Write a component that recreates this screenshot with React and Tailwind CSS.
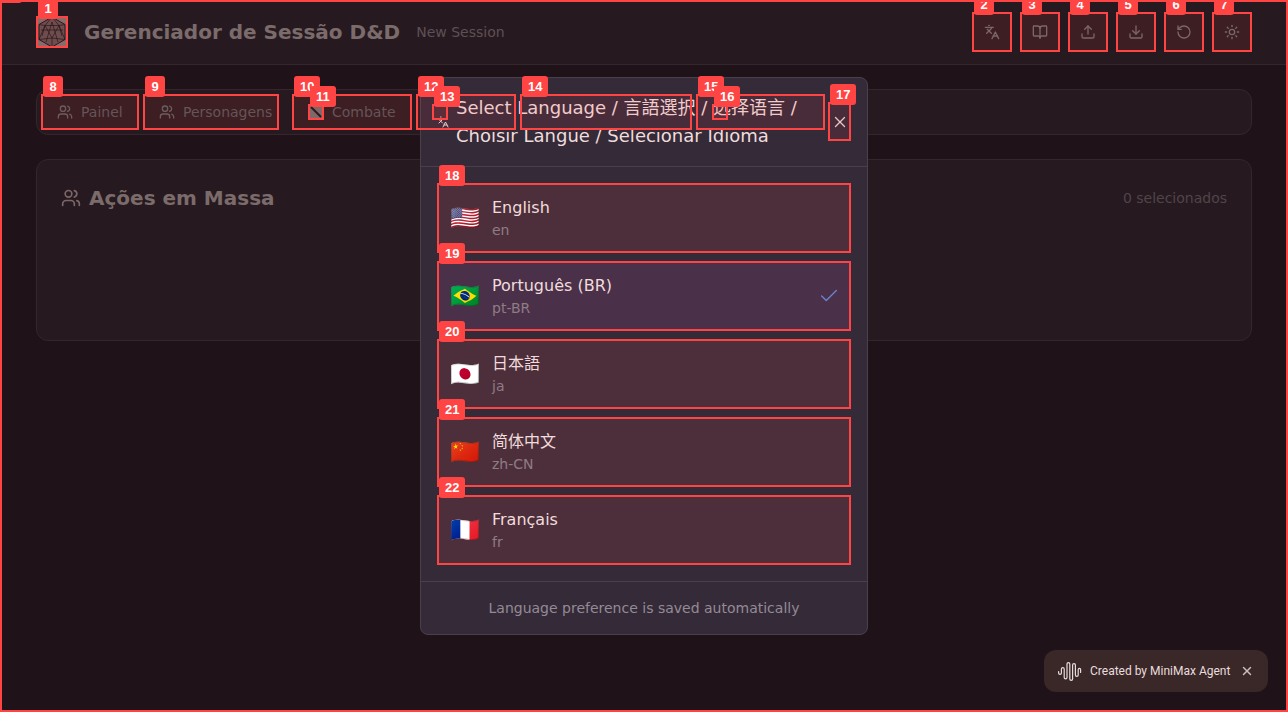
import { Languages, BookOpen, Upload, Download, RotateCcw, Sun, Users, X, Check } from "lucide-react";
import clsx from "clsx";

const Badge = ({ n }) => (
  <span className="absolute left-[2px] top-[-18px] z-30 flex h-[21px] min-w-[20px] items-center justify-center rounded-[3px] bg-[#ff4444] px-[6px] font-['Liberation_Sans',sans-serif] text-[13px] font-bold text-white">
    {n}
  </span>
);

// annotated box: red frame plus number tag
const Mark = ({ n, className, children }) => (
  <div className={clsx("relative bg-[#ff4444]/10 outline-2 -outline-offset-2 outline-[#ff4444]", className)}>
    <Badge n={n} />
    {children}
  </div>
);

const Logo = () => (
  <svg viewBox="0 0 32 32" className="h-8 w-8 bg-[#8a6b6b]">
    <path d="M16 1 29 8.500V23.500L16 31 3 23.500V8.500Z" fill="#6f4d4e" stroke="#2a161a" strokeWidth="1" />
    <path
      d="M16 1 9 9.500 23 9.500 16 1M3 8.500 9 9.500 3 23.500M29 8.500 23 9.500 29 23.500M9 9.500 16 22 23 9.500M29 23.500 16 22 3 23.500M16 22 16 31M5 14 27 14M16 6 10 26M16 6 22 26M9 9.500 6 20M23 9.500 26 20"
      fill="none"
      stroke="#2a161a"
      strokeWidth="0.7"
    />
  </svg>
);

const headerIcons = [
  { n: 2, Icon: Languages },
  { n: 3, Icon: BookOpen },
  { n: 4, Icon: Upload },
  { n: 5, Icon: Download },
  { n: 6, Icon: RotateCcw },
  { n: 7, Icon: Sun },
];

const languages = [
  { n: 18, flag: "🇺🇸", name: "English", code: "en" },
  { n: 19, flag: "🇧🇷", name: "Português (BR)", code: "pt-BR", active: true },
  { n: 20, flag: "🇯🇵", name: "日本語", code: "ja" },
  { n: 21, flag: "🇨🇳", name: "简体中文", code: "zh-CN" },
  { n: 22, flag: "🇫🇷", name: "Français", code: "fr" },
];

const Header = () => (
  <header className="flex h-[65px] items-center justify-between border-b border-[#33272d] bg-[#261a20] pl-9 pr-9">
    <div className="flex items-center">
      <Mark n={1} className="h-8 w-8">
        <Logo />
      </Mark>
      <h1 className="ml-4 text-[20px] font-bold leading-7 text-[#7b6b6b]">Gerenciador de Sessão D&amp;D</h1>
      <span className="ml-4 text-[14px] text-[#5f5055]">New Session</span>
    </div>
    <div className="flex gap-2">
      {headerIcons.map(({ n, Icon }) => (
        <Mark key={n} n={n} className="flex h-10 w-10 items-center justify-center">
          <Icon size={16} className="text-[#7b6668]" />
        </Mark>
      ))}
    </div>
  </header>
);

const Tab = ({ n, className, icon, label }) => (
  <Mark n={n} className={clsx("flex h-9 items-center gap-2 pl-4 text-[14px] text-[#655558]", className)}>
    {icon}
    {label}
  </Mark>
);

const Nav = () => (
  <nav className="flex h-[46px] items-center rounded-xl border border-[#33272d] bg-[#261a20] px-1">
    <Tab n={8} className="w-[98px]" icon={<Users size={16} className="text-[#6d5c5e]" />} label="Painel" />
    <Tab n={9} className="ml-1 w-[136px]" icon={<Users size={16} className="text-[#6d5c5e]" />} label="Personagens" />
    <Tab
      n={10}
      className="ml-[13px] w-[120px]"
      icon={
        <Mark n={11} className="h-4 w-4 !bg-[#806868]">
          <svg viewBox="0 0 16 16" className="h-4 w-4">
            <path d="M3 3 13 13" stroke="#2a1a1e" strokeWidth="2" />
          </svg>
        </Mark>
      }
      label="Combate"
    />
  </nav>
);

const LanguageRow = ({ n, flag, name, code, active }) => (
  <Mark n={n} className="h-[70px] !bg-transparent">
    <div
      className={clsx(
        "flex h-full items-center gap-3 rounded-lg px-[13px]",
        active ? "bg-[#4a3149]" : "bg-[#4d2f3b]"
      )}
    >
      <span className="text-[24px] leading-8">{flag}</span>
      <div className="flex-1">
        <div className="text-[16px] leading-6 text-[#f0dcdc]">{name}</div>
        <div className="text-[14px] leading-5 text-[#8f7c84]">{code}</div>
      </div>
      {active && <Check size={22} strokeWidth={1.5} className="-mr-[2px] text-[#6b82cc]" />}
    </div>
  </Mark>
);

const LanguageModal = () => (
  <div className="absolute left-[420px] top-[77px] z-10 flex h-[558px] w-[448px] flex-col rounded-lg border border-[#4a404b] bg-[#352a38]">
    <div className="flex h-[89px] shrink-0 items-center border-b border-[#4a404b] pl-4 pr-4">
      <Languages size={12} className="shrink-0 text-[#e8d8d8]" />
      <h2 className="ml-[7px] w-[365px] text-[18px] leading-7 text-[#f0dcdc]">
        Select Language / 言語選択 / 选择语言 / Choisir Langue / Selecionar Idioma
      </h2>
      <button className="ml-[7px] flex h-[39px] w-[23px] shrink-0 items-center justify-center">
        <X size={18} strokeWidth={1.75} className="text-[#e8d8d8]" />
      </button>
    </div>
    <div className="flex flex-1 flex-col gap-2 px-4 pt-4">
      {languages.map((l) => (
        <LanguageRow key={l.n} {...l} />
      ))}
    </div>
    <div className="flex h-[53px] items-center justify-center border-t border-[#4a404b] text-[14px] text-[#948a96]">
      Language preference is saved automatically
    </div>
  </div>
);

const Waveform = () => (
  <svg viewBox="0 0 24 20" className="h-5 w-6 text-[#e8dcdc]" fill="none" stroke="currentColor" strokeWidth="1.200" strokeLinecap="round">
    <path d="M.600 10.500v1.500a1.400 1.400 0 0 0 2.800 0V8a1.400 1.400 0 0 1 2.800 0v8.500a1.400 1.400 0 0 0 2.800 0V3a1.400 1.400 0 0 1 2.800 0v15a1.400 1.400 0 0 0 2.800 0V4a1.400 1.400 0 0 1 2.800 0v10a1.400 1.400 0 0 0 2.800 0V8.500a1.200 1.200 0 0 1 2.400 0v3" />
  </svg>
);

const Toast = () => (
  <div className="absolute left-[1044px] top-[650px] z-10 flex h-[42px] w-[224px] items-center rounded-xl bg-[#3a2829] pl-[14px] font-['Roboto',sans-serif] text-[12px] text-[#e8dcdc]">
    <Waveform />
    <span className="ml-2">Created by MiniMax Agent</span>
    <X size={14} strokeWidth={2.5} className="ml-[10px] text-[#c8bcbc]" />
  </div>
);

export default function App() {
  return (
    <div className="relative h-[712px] w-[1288px] overflow-hidden bg-[#1f1219] font-['DejaVu_Sans','Noto_Sans_CJK_SC',sans-serif]">
      <Header />
      <main className="px-9 pt-6">
        <Nav />
        <section className="mt-6 flex h-[182px] items-start justify-between rounded-xl border border-[#33272d] bg-[#261a20] p-6">
          <div className="flex items-center gap-2">
            <Users size={20} className="text-[#7b6668]" />
            <h2 className="text-[20px] font-bold leading-7 text-[#7b6b6b]">Ações em Massa</h2>
          </div>
          <span className="text-[14px] leading-7 text-[#51444a]">0 selecionados</span>
        </section>
      </main>
      <LanguageModal />
      <Toast />

      {/* frames that sit over the modal title */}
      <Mark n={12} className="!absolute left-[416px] top-[94px] z-20 h-9 w-[100px]" />
      <Mark n={13} className="!absolute left-[432px] top-[104px] z-20 h-4 w-4" />
      <Mark n={14} className="!absolute left-[520px] top-[94px] z-20 h-9 w-[172px]" />
      <Mark n={15} className="!absolute left-[696px] top-[94px] z-20 h-9 w-[129px]" />
      <Mark n={16} className="!absolute left-[712px] top-[104px] z-20 h-4 w-4" />
      <Mark n={17} className="!absolute left-[828px] top-[102px] z-20 h-[39px] w-[23px]" />

      {/* whole page frame */}
      <div className="pointer-events-none absolute inset-0 z-40 border-2 border-[#ff4444]" />
      <span className="absolute left-0 top-[-18px] z-50 h-[21px] w-[22px] rounded-[3px] bg-[#ff4444]" />
    </div>
  );
}
